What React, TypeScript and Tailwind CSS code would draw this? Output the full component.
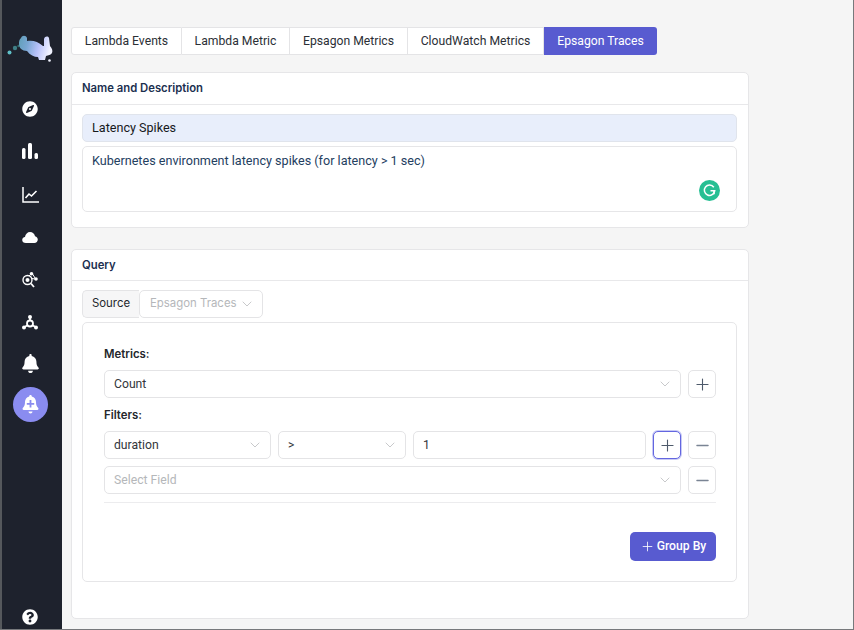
import type { ReactNode } from "react";
import { ChevronDown, Minus, Plus } from "lucide-react";
import { FaBell, FaCompass, FaQuestionCircle } from "react-icons/fa";

const TABS = ["Lambda Events", "Lambda Metric", "Epsagon Metrics", "CloudWatch Metrics"];
const TAB_WIDTHS = ["w-[111px]", "w-[108px]", "w-[118px]", "w-[136px]"];

function Logo() {
  return (
    <svg width="46" height="28" viewBox="0 0 46 28" className="mb-[36px] ml-[5px] shrink-0 self-start">
      <defs>
        <linearGradient id="rabbit" x1="0" x2="1" y1="0" y2="0.2">
          <stop offset="0" stopColor="#5f9fb8" />
          <stop offset="0.3" stopColor="#78a6d2" />
          <stop offset="0.65" stopColor="#b9c2fa" />
          <stop offset="1" stopColor="#f0f2ff" />
        </linearGradient>
      </defs>
      <circle cx="2.500" cy="17.500" r="2" fill="#5fc0c8" />
      <circle cx="8" cy="13" r="2.200" fill="#3f7f86" />
      <circle cx="11.500" cy="11" r="1.200" fill="#2f6f70" />
      <path
        d="M12 9C12 5 13 4 14 3 15 0 19 0 20 3L20 6C25 5 31 6 36 11L37 11 37 4C38 1 41 1 42 3L43 11C45 13 46 16 45 18 44 20 41 20 39 21L38 25 32 25 31 22C27 22 23 20 20 16 15 16 12 13 12 9z"
        fill="url(#rabbit)"
      />
      <circle cx="42.500" cy="25.500" r="1.300" fill="#f2f4ff" />
    </svg>
  );
}

function BarsIcon() {
  return (
    <svg width="16" height="16" viewBox="0 0 16 16" fill="white">
      <rect x="0" y="5" width="3.500" height="11" rx="1.500" />
      <rect x="6" y="0" width="4" height="16" rx="1.500" />
      <rect x="12.500" y="10" width="3.500" height="6" rx="1.500" />
    </svg>
  );
}

function ChartIcon() {
  return (
    <svg width="17" height="16" viewBox="0 0 17 16" fill="none" stroke="white" strokeWidth="1.500">
      <path d="M1 0v15h16" />
      <path d="M3.500 11l3.500-4 2.500 2 5-5" strokeWidth="1.600" />
    </svg>
  );
}

function CloudIcon() {
  return (
    <svg width="16" height="11" viewBox="0 0 17 12" fill="white">
      <path d="M4 12c-2.500 0-4-1.400-4-3.300 0-1.800 1.300-3 3-3.200C3.500 2.200 5.800 0 8.500 0c2.800 0 5 2 5.500 4.700 1.800.3 3 1.800 3 3.600 0 2.100-1.500 3.700-3.800 3.700z" />
    </svg>
  );
}

function SearchNodesIcon() {
  return (
    <svg width="16" height="16" viewBox="0 0 16 16" fill="none" stroke="white">
      <circle cx="5.500" cy="8" r="4.500" strokeWidth="1.400" />
      <circle cx="5.500" cy="8" r="2" fill="white" stroke="none" />
      <path d="M9 11.500l3 3.500" strokeWidth="1.800" />
      <path d="M7 4l2-2M10 6.500l3 .500M10.500 2l2.500 4" strokeWidth="1" />
      <circle cx="9.500" cy="1.800" r="1.800" fill="white" stroke="none" />
      <circle cx="14" cy="7" r="1.800" fill="white" stroke="none" />
    </svg>
  );
}

function NetworkIcon() {
  return (
    <svg width="16" height="15" viewBox="0 0 16 15" fill="none" stroke="white" strokeWidth="1.800">
      <circle cx="8" cy="8.500" r="3" />
      <path d="M8 2v4M2.500 12l3-1.800M13.500 12l-3-1.800" />
      <circle cx="8" cy="2" r="2" fill="white" stroke="none" />
      <circle cx="2" cy="12.500" r="2" fill="white" stroke="none" />
      <circle cx="14" cy="12.500" r="2" fill="white" stroke="none" />
    </svg>
  );
}

function BellPlusIcon() {
  return (
    <svg width="17" height="19" viewBox="0 0 17 19">
      <path
        d="M8.500 0c.8 0 1.300.6 1.300 1.400 2.700.6 4.200 2.800 4.200 5.600 0 3 .7 4.400 2.200 6 .6.800.2 2-.9 2H1.700c-1.100 0-1.500-1.200-.9-2C2.300 11.400 3 10 3 7c0-2.800 1.500-5 4.200-5.600C7.200.6 7.700 0 8.500 0z"
        fill="white"
      />
      <path d="M6.500 16.500h4c0 1.200-.9 2-2 2s-2-.8-2-2z" fill="white" />
      <path d="M8.500 5v7.500M4.800 8.800h7.400" stroke="#8a8cf0" strokeWidth="1.800" />
    </svg>
  );
}

function Sidebar() {
  return (
    <div className="flex h-full w-[62px] shrink-0 flex-col items-center border-l-2 border-[#55585c] bg-[#1e222d] pr-[4px] pt-[35px]">
      <Logo />
      <div className="flex h-[20px] items-center"><FaCompass size={16} color="white" /></div>
      <div className="mt-[22px] flex h-[20px] items-center"><BarsIcon /></div>
      <div className="mt-[24px] flex h-[20px] items-center"><ChartIcon /></div>
      <div className="mt-[22px] flex h-[20px] items-center"><CloudIcon /></div>
      <div className="mt-[23px] flex h-[20px] items-center"><SearchNodesIcon /></div>
      <div className="mt-[22px] flex h-[20px] items-center"><NetworkIcon /></div>
      <div className="mt-[21px] flex h-[20px] items-center"><FaBell size={19} color="white" /></div>
      <div className="mt-[14px] flex h-[35px] w-[35px] items-center justify-center rounded-full bg-[#8a8cf0]"><BellPlusIcon /></div>
      <div className="mt-auto mb-[2px] flex h-[20px] items-center"><FaQuestionCircle size={16} color="white" /></div>
    </div>
  );
}

function Tabs() {
  return (
    <div className="flex h-[28px] w-[586px] font-['Roboto',sans-serif] text-[12.2px]">
      {TABS.map((t, i) => (
        <div
          key={t}
          className={`flex items-center justify-center border-y border-r border-[#e4e4e6] bg-white text-[#2b2f36] ${TAB_WIDTHS[i]} ${i === 0 ? "rounded-l-[3px] border-l" : ""}`}
        >
          {t}
        </div>
      ))}
      <div className="flex flex-1 items-center justify-center rounded-r-[3px] bg-[#585bd0] text-white">Epsagon Traces</div>
    </div>
  );
}

function Card({ title, className, headerHeight, children }: { title: string; className: string; headerHeight: string; children: ReactNode }) {
  return (
    <div className={`w-[678px] rounded-[5px] border border-[#e6e6e8] bg-white ${className}`}>
      <div className={`flex items-center border-b border-[#e8e8ea] px-[10px] font-['Inter',sans-serif] text-[11.3px] font-semibold text-[#1b2f4f] ${headerHeight}`}>
        {title}
      </div>
      {children}
    </div>
  );
}

function SelectBox({ label, width, muted }: { label: string; width: string; muted?: boolean }) {
  return (
    <div className={`flex h-[28px] items-center justify-between rounded-[5px] border border-[#e4e4e6] bg-white pl-[9px] pr-[7px] font-['Roboto',sans-serif] text-[12.2px] ${width} ${muted ? "text-[#b5b7ba]" : "text-[#33363b]"}`}>
      <span>{label}</span>
      <ChevronDown size={16} strokeWidth={1.1} color="#b3b5b8" />
    </div>
  );
}

function IconBtn({ minus, active }: { minus?: boolean; active?: boolean }) {
  return (
    <div className={`flex h-[28px] w-[28px] shrink-0 items-center justify-center rounded-[5px] border bg-white ${active ? "border-[#6366e0] shadow-[0_0_0_1px_#c9cbf5]" : "border-[#e4e4e6]"}`}>
      {minus ? <Minus size={19} strokeWidth={1.8} color="#7a8494" /> : <Plus size={19} strokeWidth={1.4} color="#4e5a6b" />}
    </div>
  );
}

function Grammarly() {
  return (
    <div className="flex h-[21px] w-[21px] items-center justify-center self-end rounded-full bg-[#27bf93]">
      <svg width="13" height="13" viewBox="0 0 13 13" fill="none" stroke="white" strokeWidth="1.500">
        <path d="M10.800 3.200A5.200 5.200 0 1 0 11.700 6.800H7.500" />
        <path d="M11 6.800v3.500" />
      </svg>
    </div>
  );
}

function QueryForm() {
  return (
    <div className="mt-[4px] h-[260px] rounded-[5px] border border-[#e6e6e8] pl-[21px] pr-[20px] pt-[22px]">
      <div className="font-['Inter',sans-serif] text-[11.4px] font-semibold leading-[18px] text-[#24272c]">Metrics:</div>
      <div className="mt-[7px] flex gap-[7px]">
        <SelectBox label="Count" width="w-[577px]" />
        <IconBtn />
      </div>
      <div className="mt-[8px] font-['Inter',sans-serif] text-[11.4px] font-semibold leading-[18px] text-[#24272c]">Filters:</div>
      <div className="mt-[7px] flex gap-[7px]">
        <SelectBox label="duration" width="w-[167px]" />
        <SelectBox label=">" width="w-[128px]" />
        <div className="flex h-[28px] w-[233px] items-center rounded-[5px] border border-[#e4e4e6] pl-[9px] font-['Roboto',sans-serif] text-[12.2px] text-[#33363b]">1</div>
        <IconBtn active />
        <IconBtn minus />
      </div>
      <div className="mt-[7px] flex gap-[7px]">
        <SelectBox label="Select Field" width="w-[577px]" muted />
        <IconBtn minus />
      </div>
      <div className="mt-[8px] h-px bg-[#ececee]" />
      <div className="mt-[29px] flex justify-end">
        <div className="flex h-[29px] w-[86px] items-center justify-center gap-[2px] rounded-[5px] bg-[#585bd0] font-['Roboto',sans-serif] text-[12.2px] font-medium text-white">
          <Plus size={15} strokeWidth={1.3} />
          Group By
        </div>
      </div>
    </div>
  );
}

export default function App() {
  return (
    <div className="flex h-[630px] w-[854px] overflow-hidden border-r border-b border-[#77797c] bg-[#f5f5f5]">
      <Sidebar />
      <div className="flex-1 pl-[9px] pt-[27px]">
        <Tabs />
        <Card title="Name and Description" headerHeight="h-[32px]" className="mt-[17px] h-[156px]">
          <div className="pl-[10px] pr-[11px] pt-[9px]">
            <div className="flex h-[28px] items-center rounded-[5px] border border-[#e0e4ec] bg-[#e8eefb] pl-[9px] font-['Roboto',sans-serif] text-[12.6px] text-[#17191c]">
              Latency Spikes
            </div>
            <div className="mt-[4px] flex h-[66px] items-start justify-between rounded-[5px] border border-[#e6e6e8] pb-[10px] pl-[9px] pr-[16px] pt-[5px] font-['Roboto',sans-serif] text-[12.6px] text-[#24405f]">
              <span>Kubernetes environment latency spikes (for latency &gt; 1 sec)</span>
              <Grammarly />
            </div>
          </div>
        </Card>
        <Card title="Query" headerHeight="h-[31px]" className="mt-[21px] h-[370px]">
          <div className="pl-[10px] pr-[11px] pt-[9px]">
            <div className="flex font-['Inter',sans-serif] text-[11.4px]">
              <div className="flex h-[28px] w-[57px] items-center justify-center rounded-l-[5px] border-y border-l border-[#e4e4e6] bg-[#f6f6f7] text-[#24272c]">Source</div>
              <div className="flex h-[28px] w-[124px] items-center justify-between whitespace-nowrap rounded-[5px] border border-[#e4e4e6] pl-[10px] pr-[7px] text-[#b5b7ba]">
                <span>Epsagon Traces</span>
                <ChevronDown size={16} strokeWidth={1.1} color="#b3b5b8" />
              </div>
            </div>
            <QueryForm />
          </div>
        </Card>
      </div>
    </div>
  );
}
